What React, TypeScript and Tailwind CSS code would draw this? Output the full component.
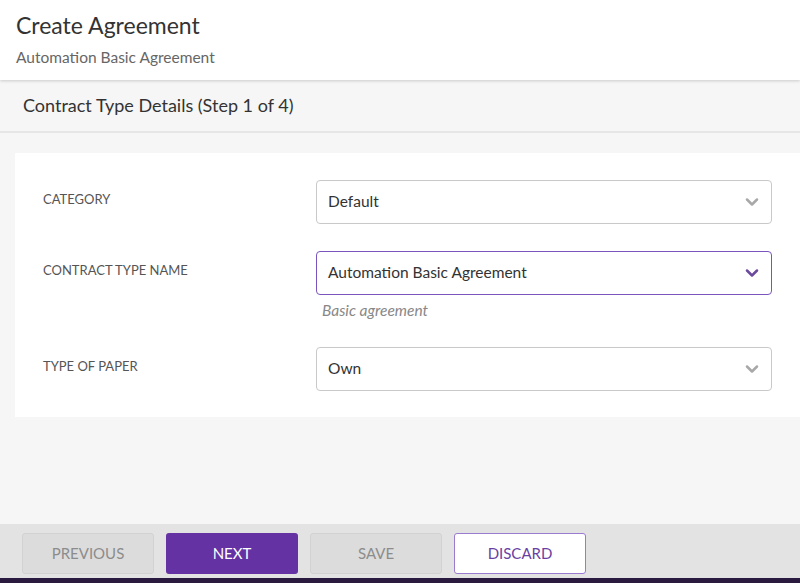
import { ChevronDown } from "lucide-react";

const font = { fontFamily: '"Lato", "Open Sans", sans-serif' };

type Field = {
  label: string;
  value: string;
  active?: boolean;
  hint?: string;
};

const fields: Field[] = [
  { label: "CATEGORY", value: "Default" },
  { label: "CONTRACT TYPE NAME", value: "Automation Basic Agreement", active: true, hint: "Basic agreement" },
  { label: "TYPE OF PAPER", value: "Own" },
];

function SelectBox({ value, active }: { value: string; active?: boolean }) {
  return (
    <div
      className={`flex h-[44px] items-center justify-between rounded-[4px] border bg-white pl-[11px] pr-[9px] ${
        active ? "border-[#7b55bd]" : "border-[#c9c9c9]"
      }`}
    >
      <span className="text-[15.5px] text-[#333]">{value}</span>
      <ChevronDown
        className={`h-[20px] w-[20px] ${active ? "text-[#6b4a9e]" : "text-[#a8a8a8]"}`}
        strokeWidth={3}
      />
    </div>
  );
}

export default function App() {
  return (
    <div className="flex h-[583px] w-[800px] flex-col overflow-hidden bg-[#f6f6f6]" style={font}>
      <header className="relative z-10 h-[80px] bg-white px-[16px] pt-[9px] shadow-[0_1px_3px_rgba(0,0,0,0.18)]">
        <h1 className="text-[23px] leading-[32px] text-[#333]">Create Agreement</h1>
        <p className="mt-[6px] text-[15.5px] leading-[20px] text-[#666]">Automation Basic Agreement</p>
      </header>

      <div className="flex h-[53px] items-center border-b-2 border-[#e6e6e6] bg-[#f6f6f6] px-[23px]">
        <h2 className="text-[18px] text-[#333]">Contract Type Details (Step 1 of 4)</h2>
      </div>

      <main className="flex-1 pl-[15px] pt-[20px]">
        <div className="flex flex-col gap-[27px] bg-white pb-[26px] pl-[28px] pr-[28px] pt-[27px]">
          {fields.map((f) => (
            <div key={f.label} className="grid grid-cols-[273px_1fr]">
              <label className="pt-[11px] text-[13px] leading-[16px] text-[#555]">{f.label}</label>
              <div>
                <SelectBox value={f.value} active={f.active} />
                {f.hint && (
                  <p className="mt-[5px] pl-[6px] text-[15.5px] italic leading-[20px] text-[#888]">{f.hint}</p>
                )}
              </div>
            </div>
          ))}
        </div>
      </main>

      <footer className="flex h-[54px] items-start gap-[12px] bg-[#e3e3e3] px-[22px] pt-[9px]">
        <button className="h-[41px] w-[132px] rounded-[3px] border border-[#d2d2d2] bg-[#dcdcdc] text-[15px] text-[#8c8c8c]">
          PREVIOUS
        </button>
        <button className="h-[41px] w-[132px] rounded-[3px] bg-[#6432a3] text-[15px] text-white">NEXT</button>
        <button className="h-[41px] w-[132px] rounded-[3px] border border-[#d2d2d2] bg-[#dcdcdc] text-[15px] text-[#8c8c8c]">
          SAVE
        </button>
        <button className="h-[41px] w-[132px] rounded-[3px] border border-[#9a7bcf] bg-white text-[15px] text-[#6a3fa3]">
          DISCARD
        </button>
      </footer>
      <div className="h-[5px] bg-[#2b1a40]" />
    </div>
  );
}
